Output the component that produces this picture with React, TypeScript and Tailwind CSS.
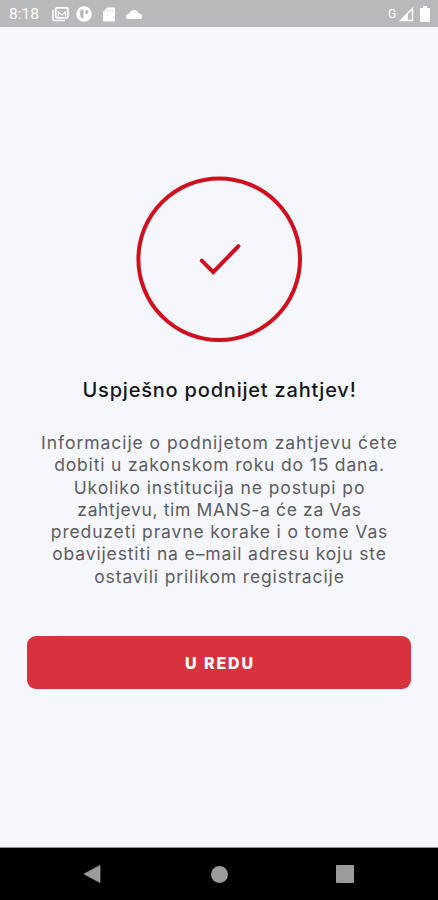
import React from 'react';

const messageLines = [
  { text: 'Informacije o podnijetom zahtjevu ćete', tracking: 'tracking-[0.95px]' },
  { text: 'dobiti u zakonskom roku do 15 dana.', tracking: 'tracking-[0.84px]' },
  { text: 'Ukoliko institucija ne postupi po', tracking: 'tracking-[0.9px]' },
  { text: 'zahtjevu, tim MANS-a će za Vas', tracking: 'tracking-[0.64px]' },
  { text: 'preduzeti pravne korake i o tome Vas', tracking: 'tracking-[0.85px]' },
  { text: 'obavijestiti na e–mail adresu koju ste', tracking: 'tracking-[0.86px]' },
  { text: 'ostavili prilikom registracije', tracking: 'tracking-[0.87px]' },
];

const StatusBar: React.FC = () => (
  <header className="flex h-[27px] shrink-0 items-center justify-between bg-[#b7b9bb] pt-px pr-2 pl-[9px] font-[Roboto,sans-serif] text-white">
    <div className="flex items-center">
      <span className="w-[43px] pt-[2px] text-[15.5px] leading-none">8:18</span>
      {/* Gallery */}
      <svg className="h-4 w-[17px]" viewBox="0 0 17 16" fill="none" stroke="currentColor">
        <path d="M1 4v9.5q0 1 1 1h11" strokeWidth="1.5" />
        <rect x="3.8" y="1.8" width="12.2" height="10" rx="1.2" strokeWidth="1.7" />
        <path d="M6.3 10.5V6l3.6 3 3.6-3v4.5" strokeWidth="1.3" />
      </svg>
      <svg className="ml-[7px] h-4 w-4" viewBox="0 0 16 16">
        <circle cx="8" cy="8" r="7.8" fill="currentColor" />
        <path d="M4.5 3.5h3v9h-2q-2-2-1-9zM9.5 4.3h2.7v3.4H9.5z" fill="#b7b9bb" />
      </svg>
      {/* SD card */}
      <svg className="ml-[11px] h-[15px] w-3" viewBox="0 0 12 15">
        <path d="M4.5.5H11q1 0 1 1v12q0 1-1 1H1q-1 0-1-1V5z" fill="currentColor" />
        <path d="M4.5 2.5v2.2M6.9 2.5v2.2M9.3 2.5v2.2" stroke="#b7b9bb" strokeWidth=".6" />
      </svg>
      <svg className="ml-[11px] h-[11px] w-4" viewBox="0 0 16 11">
        <path d="M3.5 10Q0 10 0 7.5 0 5.2 3 4.8 4.3 1 8 1q3.5 0 4.5 3.6Q16 4.8 16 7.4 16 10 13 10z" fill="currentColor" />
      </svg>
    </div>
    <div className="flex items-center">
      <span className="w-[11px] text-[12px] leading-none">G</span>
      <svg className="h-[15px] w-[15px]" viewBox="0 0 15 15">
        <path d="M1.5 13.5L13.5 1.5v12z" fill="none" stroke="currentColor" strokeWidth="1.4" />
        <path d="M1 14L9 6v8z" fill="currentColor" />
      </svg>
      <svg className="ml-[6px] h-4 w-[10px]" viewBox="0 0 10 16">
        <path d="M3 0h4v2h2q1 0 1 1v12q0 1-1 1H1q-1 0-1-1V3q0-1 1-1h2z" fill="currentColor" />
      </svg>
    </div>
  </header>
);

const NavigationBar: React.FC = () => (
  <nav className="flex h-[52px] shrink-0 items-center justify-between bg-black px-[83px] text-[#9b9b9b]">
    <button aria-label="Nazad">
      <svg className="h-[18px] w-[18px]" viewBox="0 0 18 18" fill="currentColor">
        <path d="M1 9L17 .5v17z" stroke="currentColor" strokeWidth=".8" strokeLinejoin="round" />
      </svg>
    </button>
    <button aria-label="Početna" className="ml-px h-[17px] w-[17px] rounded-full bg-[#9b9b9b]" />
    <button aria-label="Nedavno" className="mr-px h-[18px] w-[18px] rounded-[1px] bg-[#9b9b9b]" />
  </nav>
);

const App: React.FC = () => {
  return (
    <div className="flex h-[900px] w-[438px] flex-col overflow-hidden bg-[#f5f7fc] font-[Inter,sans-serif]">
      <StatusBar />

      <main className="flex flex-1 flex-col items-center px-[27px] pt-[149px]">
        <svg className="h-[166px] w-[166px] shrink-0" viewBox="0 0 166 166" fill="none" stroke="#d0101f" strokeWidth="4">
          <circle cx="83.2" cy="83.2" r="80.8" />
          <path d="M65.8 84.7L77.2 96.2l25.2-26" strokeLinecap="round" strokeLinejoin="miter" />
        </svg>

        <h1 className="mt-[34px] pl-px text-[20px] leading-7 font-medium tracking-[0.8px] whitespace-nowrap text-[#15171a]">
          Uspješno podnijet zahtjev!
        </h1>

        <p className="mt-[28px] pl-px text-center text-[17.5px] leading-[22.3px] text-[#5b5d61]">
          {messageLines.map((line) => (
            <span key={line.text} className={`block whitespace-nowrap ${line.tracking}`}>
              {line.text}
            </span>
          ))}
        </p>

        <button className="mt-[48px] h-[53px] w-[384px] shrink-0 rounded-[9px] bg-[#d7323e] pt-px pl-[2px] text-[16px] font-extrabold tracking-[1.9px] text-white">
          U REDU
        </button>
      </main>

      <div className="h-px shrink-0 bg-[#8e8f92]" />
      <NavigationBar />
    </div>
  );
};

export default App;
